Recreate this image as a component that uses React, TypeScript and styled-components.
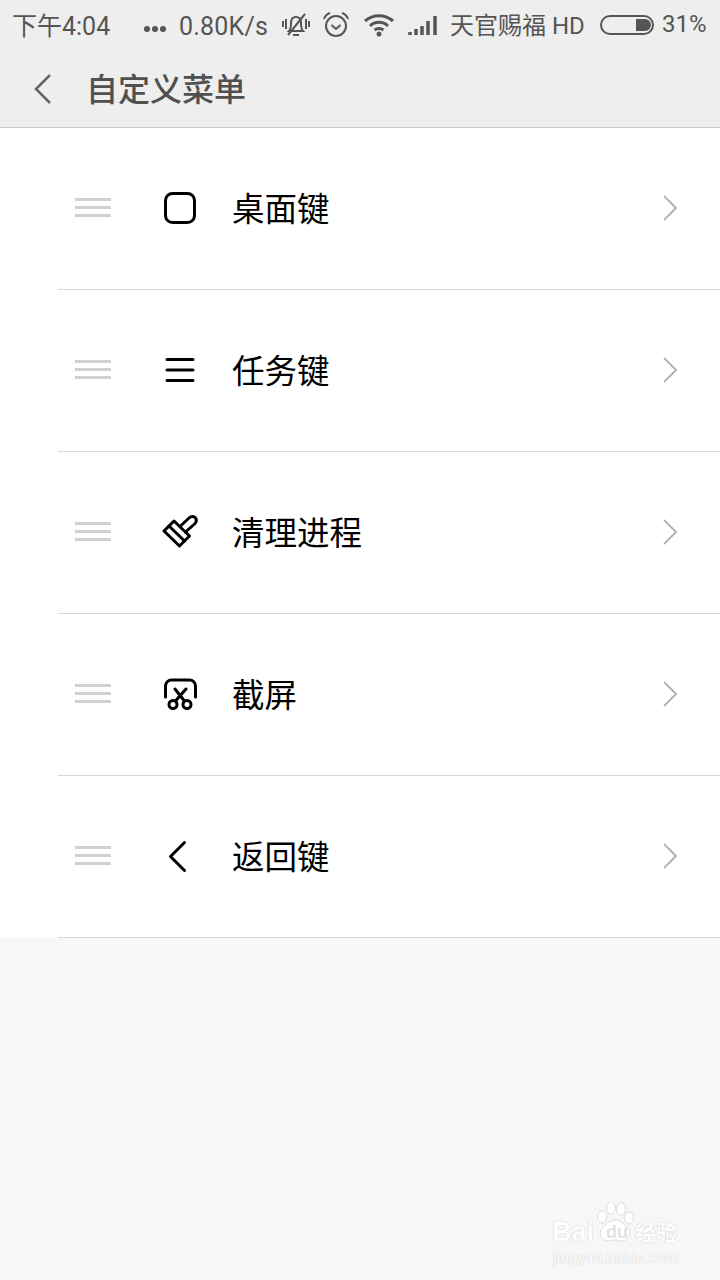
import styled, { createGlobalStyle } from "styled-components";

const GlobalStyle = createGlobalStyle`
  html, body {
    margin: 0;
    padding: 0;
    background: #f7f7f7;
  }
  * {
    box-sizing: border-box;
  }
`;

const FONT = `Roboto, "Noto Sans CJK SC", sans-serif`;

const Page = styled.div`
  position: relative;
  width: 720px;
  height: 1280px;
  overflow: hidden;
  background: #f7f7f7;
  font-family: ${FONT};
`;

const Top = styled.div`
  height: 128px;
  background: #eeeeee;
  border-bottom: 1px solid #c9c9c9;
`;

const StatusBar = styled.div`
  display: flex;
  align-items: center;
  height: 50px;
  padding: 0 12px;
  color: #555555;
  font-size: 25px;
  white-space: nowrap;
`;

const Clock = styled.span`
  width: 131px;
  margin-top: -2px;
`;

const Dots = styled.svg`
  width: 24px;
  height: 8px;
  margin-top: 8px;
  margin-right: 12px;
`;

const Speed = styled.span`
  width: 90px;
  margin-top: 2px;
  letter-spacing: 0.2px;
`;

const StatusIcon = styled.svg<{ $left: number }>`
  flex: none;
  margin-left: ${(p) => p.$left}px;
  fill: none;
  stroke: #555555;
`;

const Carrier = styled.span`
  width: 137px;
  margin-left: 11px;
  margin-top: -4px;
  font-size: 24px;
`;

const Percent = styled.span`
  margin-left: 8px;
  margin-top: -2px;
  font-size: 24px;
`;

const Header = styled.div`
  display: flex;
  align-items: center;
  height: 77px;
  padding-left: 34px;
`;

const BackIcon = styled.svg`
  width: 18px;
  height: 32px;
  margin-right: 34px;
`;

const Title = styled.h1`
  margin: 2px 0 0;
  color: #505050;
  font-size: 32px;
  font-weight: 500;
  line-height: 40px;
`;

const List = styled.div`
  background: #ffffff;
`;

const Row = styled.div`
  position: relative;
  display: flex;
  align-items: center;
  height: 162px;
  padding: 0 42px 0 75px;

  &::after {
    content: "";
    position: absolute;
    left: 58px;
    right: 0;
    bottom: 0;
    height: 1px;
    background: #d9d9d9;
  }
`;

const Handle = styled.div`
  display: flex;
  flex-direction: column;
  gap: 5px;
  width: 36px;
  margin-top: -3px;
`;

const HandleBar = styled.span`
  height: 3px;
  background: #d0d0d0;
`;

const RowIcon = styled.svg`
  flex: none;
  width: 40px;
  height: 40px;
  margin-left: 49px;
  margin-top: -2px;
  fill: none;
  stroke: #000000;
  stroke-width: 3;
`;

const Label = styled.span`
  flex: 1;
  margin-left: 32px;
  margin-top: 2px;
  color: #000000;
  font-size: 32.500px;
  line-height: 40px;
`;

const Chevron = styled.svg`
  width: 16px;
  height: 28px;
  margin-top: -2px;
`;

const Watermark = styled.div`
  position: absolute;
  left: 552px;
  top: 1202px;
  width: 132px;
  height: 64px;
  color: #ffffff;
  white-space: nowrap;
  text-shadow: 0 0 1px #cccccc, 0 0 1px #cccccc;
`;

const MarkBai = styled.span`
  position: absolute;
  left: 0;
  top: 14px;
  font-family: "Liberation Sans", sans-serif;
  font-size: 27px;
  font-weight: 700;
  line-height: 32px;
`;

const MarkPaw = styled.svg`
  position: absolute;
  left: 44px;
  top: 0;
  width: 40px;
  height: 42px;
`;

const MarkDu = styled.span`
  position: absolute;
  left: 54px;
  top: 20px;
  font-family: "Liberation Sans", sans-serif;
  color: #e2e2e2;
  text-shadow: none;
  font-size: 18px;
  font-weight: 700;
  line-height: 20px;
`;

const MarkJing = styled.span`
  position: absolute;
  left: 83px;
  top: 18px;
  font-size: 21px;
  line-height: 26px;
  font-weight: 700;
`;

const MarkUrl = styled.span`
  position: absolute;
  left: 1px;
  top: 46px;
  font-size: 15.500px;
  line-height: 20px;
`;

const ScreenIcon = () => (
  <RowIcon viewBox="0 0 40 40">
    <rect x="5.500" y="5.500" width="29" height="29" rx="7" />
  </RowIcon>
);

const TasksIcon = () => (
  <RowIcon viewBox="0 0 40 40" strokeLinecap="round">
    <path d="M7 9.500h26M7 20h26M7 30.500h26" />
  </RowIcon>
);

const BrushIcon = () => (
  <RowIcon viewBox="0 0 40 40" strokeLinejoin="round" strokeLinecap="round">
    <path d="M4 19 14 9l15.500 15-10 10z" />
    <path d="M9 14l15.500 15" />
    <path d="M20 14.500 29 6c2-2 5-2 6.500 0s1 4-1 6L25.500 20" />
  </RowIcon>
);

const CutIcon = () => (
  <RowIcon viewBox="0 0 40 40" strokeLinecap="round">
    <path d="M5.500 23V12a6 6 0 0 1 6-6h18a6 6 0 0 1 6 6v11" />
    <path d="M15 15l9.500 12M26 15 15.500 27" />
    <circle cx="13" cy="30.500" r="4" />
    <circle cx="27" cy="30.500" r="4" />
  </RowIcon>
);

const ReturnIcon = () => (
  <RowIcon viewBox="0 0 40 40" strokeLinecap="round" strokeLinejoin="round">
    <path d="M24.500 6.500 10.500 20.500l14 14" />
  </RowIcon>
);

const items = [
  { label: "桌面键", icon: <ScreenIcon /> },
  { label: "任务键", icon: <TasksIcon /> },
  { label: "清理进程", icon: <BrushIcon /> },
  { label: "截屏", icon: <CutIcon /> },
  { label: "返回键", icon: <ReturnIcon /> },
];

const App = () => {
  return (
    <Page>
      <GlobalStyle />
      <Top>
        <StatusBar>
          <Clock>下午4:04</Clock>
          <Dots viewBox="0 0 24 8">
            <circle cx="4" cy="4" r="3" fill="#555555" />
            <circle cx="12" cy="4" r="3" fill="#555555" />
            <circle cx="20" cy="4" r="3" fill="#555555" />
          </Dots>
          <Speed>0.80K/s</Speed>
          <StatusIcon $left={13} width="28" height="26" viewBox="0 0 28 26" strokeWidth="2">
            <path d="M7 19c2-2 2-4 2-8s2-6 5-6 5 2 5 6 0 6 2 8zM11 23h6" />
            <path d="M1 9v6M4 7v10M24 7v10M27 9v6" />
            <path d="M6 23 23 2" />
          </StatusIcon>
          <StatusIcon $left={12} width="28" height="28" viewBox="0 0 28 28" strokeWidth="2">
            <circle cx="14" cy="15" r="10" />
            <path d="M9.500 14l4.500 4 4.500-4M2 8c1-3 3-5 6-6M26 8c-1-3-3-5-6-6" />
          </StatusIcon>
          <StatusIcon $left={13} width="32" height="24" viewBox="0 0 32 24" strokeWidth="3">
            <path d="M2 8c8-7 20-7 28 0M7 13c5-5 13-5 18 0M11.500 17c3-2 6-2 9 0" />
            <circle cx="16" cy="21" r="2.500" fill="#555555" stroke="none" />
          </StatusIcon>
          <StatusIcon $left={12} width="32" height="22" viewBox="0 0 32 22" strokeWidth="3.500">
            <path d="M3 21v-3M9 21v-6M15 21v-9M21 21V7M28 21V2" />
          </StatusIcon>
          <Carrier>天官赐福 HD</Carrier>
          <StatusIcon $left={13} width="54" height="22" viewBox="0 0 54 22" strokeWidth="2">
            <rect x="1" y="2" width="52" height="18" rx="9" />
            <path d="M36 5h9a6 6 0 0 1 0 12h-9z" fill="#555555" stroke="none" />
          </StatusIcon>
          <Percent>31%</Percent>
        </StatusBar>
        <Header>
          <BackIcon viewBox="0 0 18 32">
            <path d="M16 2 2 16l14 14" fill="none" stroke="#666666" strokeWidth="2.500" />
          </BackIcon>
          <Title>自定义菜单</Title>
        </Header>
      </Top>
      <List>
        {items.map((item) => (
          <Row key={item.label}>
            <Handle>
              <HandleBar />
              <HandleBar />
              <HandleBar />
            </Handle>
            {item.icon}
            <Label>{item.label}</Label>
            <Chevron viewBox="0 0 16 28">
              <path d="M2 2l12 12L2 26" fill="none" stroke="#b3b3b3" strokeWidth="2" />
            </Chevron>
          </Row>
        ))}
      </List>
      <Watermark>
        <MarkBai>Bai</MarkBai>
        <MarkPaw viewBox="0 0 40 42">
          <g fill="#ffffff" stroke="#dcdcdc" strokeWidth="1">
            <ellipse cx="6" cy="15" rx="4.500" ry="6" />
            <ellipse cx="15" cy="6" rx="4.500" ry="6" />
            <ellipse cx="25" cy="7" rx="4.500" ry="6" />
            <ellipse cx="33" cy="16" rx="4.500" ry="6" />
            <path d="M20 18c5 0 7 4 11 7 5 4 3 14-5 14-3 0-4-1-7-1s-4 1-7 1c-8 0-10-10-5-14 4-3 7-7 13-7z" />
          </g>
        </MarkPaw>
        <MarkDu>du</MarkDu>
        <MarkJing>经验</MarkJing>
        <MarkUrl>jingyan.baidu.com</MarkUrl>
      </Watermark>
    </Page>
  );
};

export default App;
